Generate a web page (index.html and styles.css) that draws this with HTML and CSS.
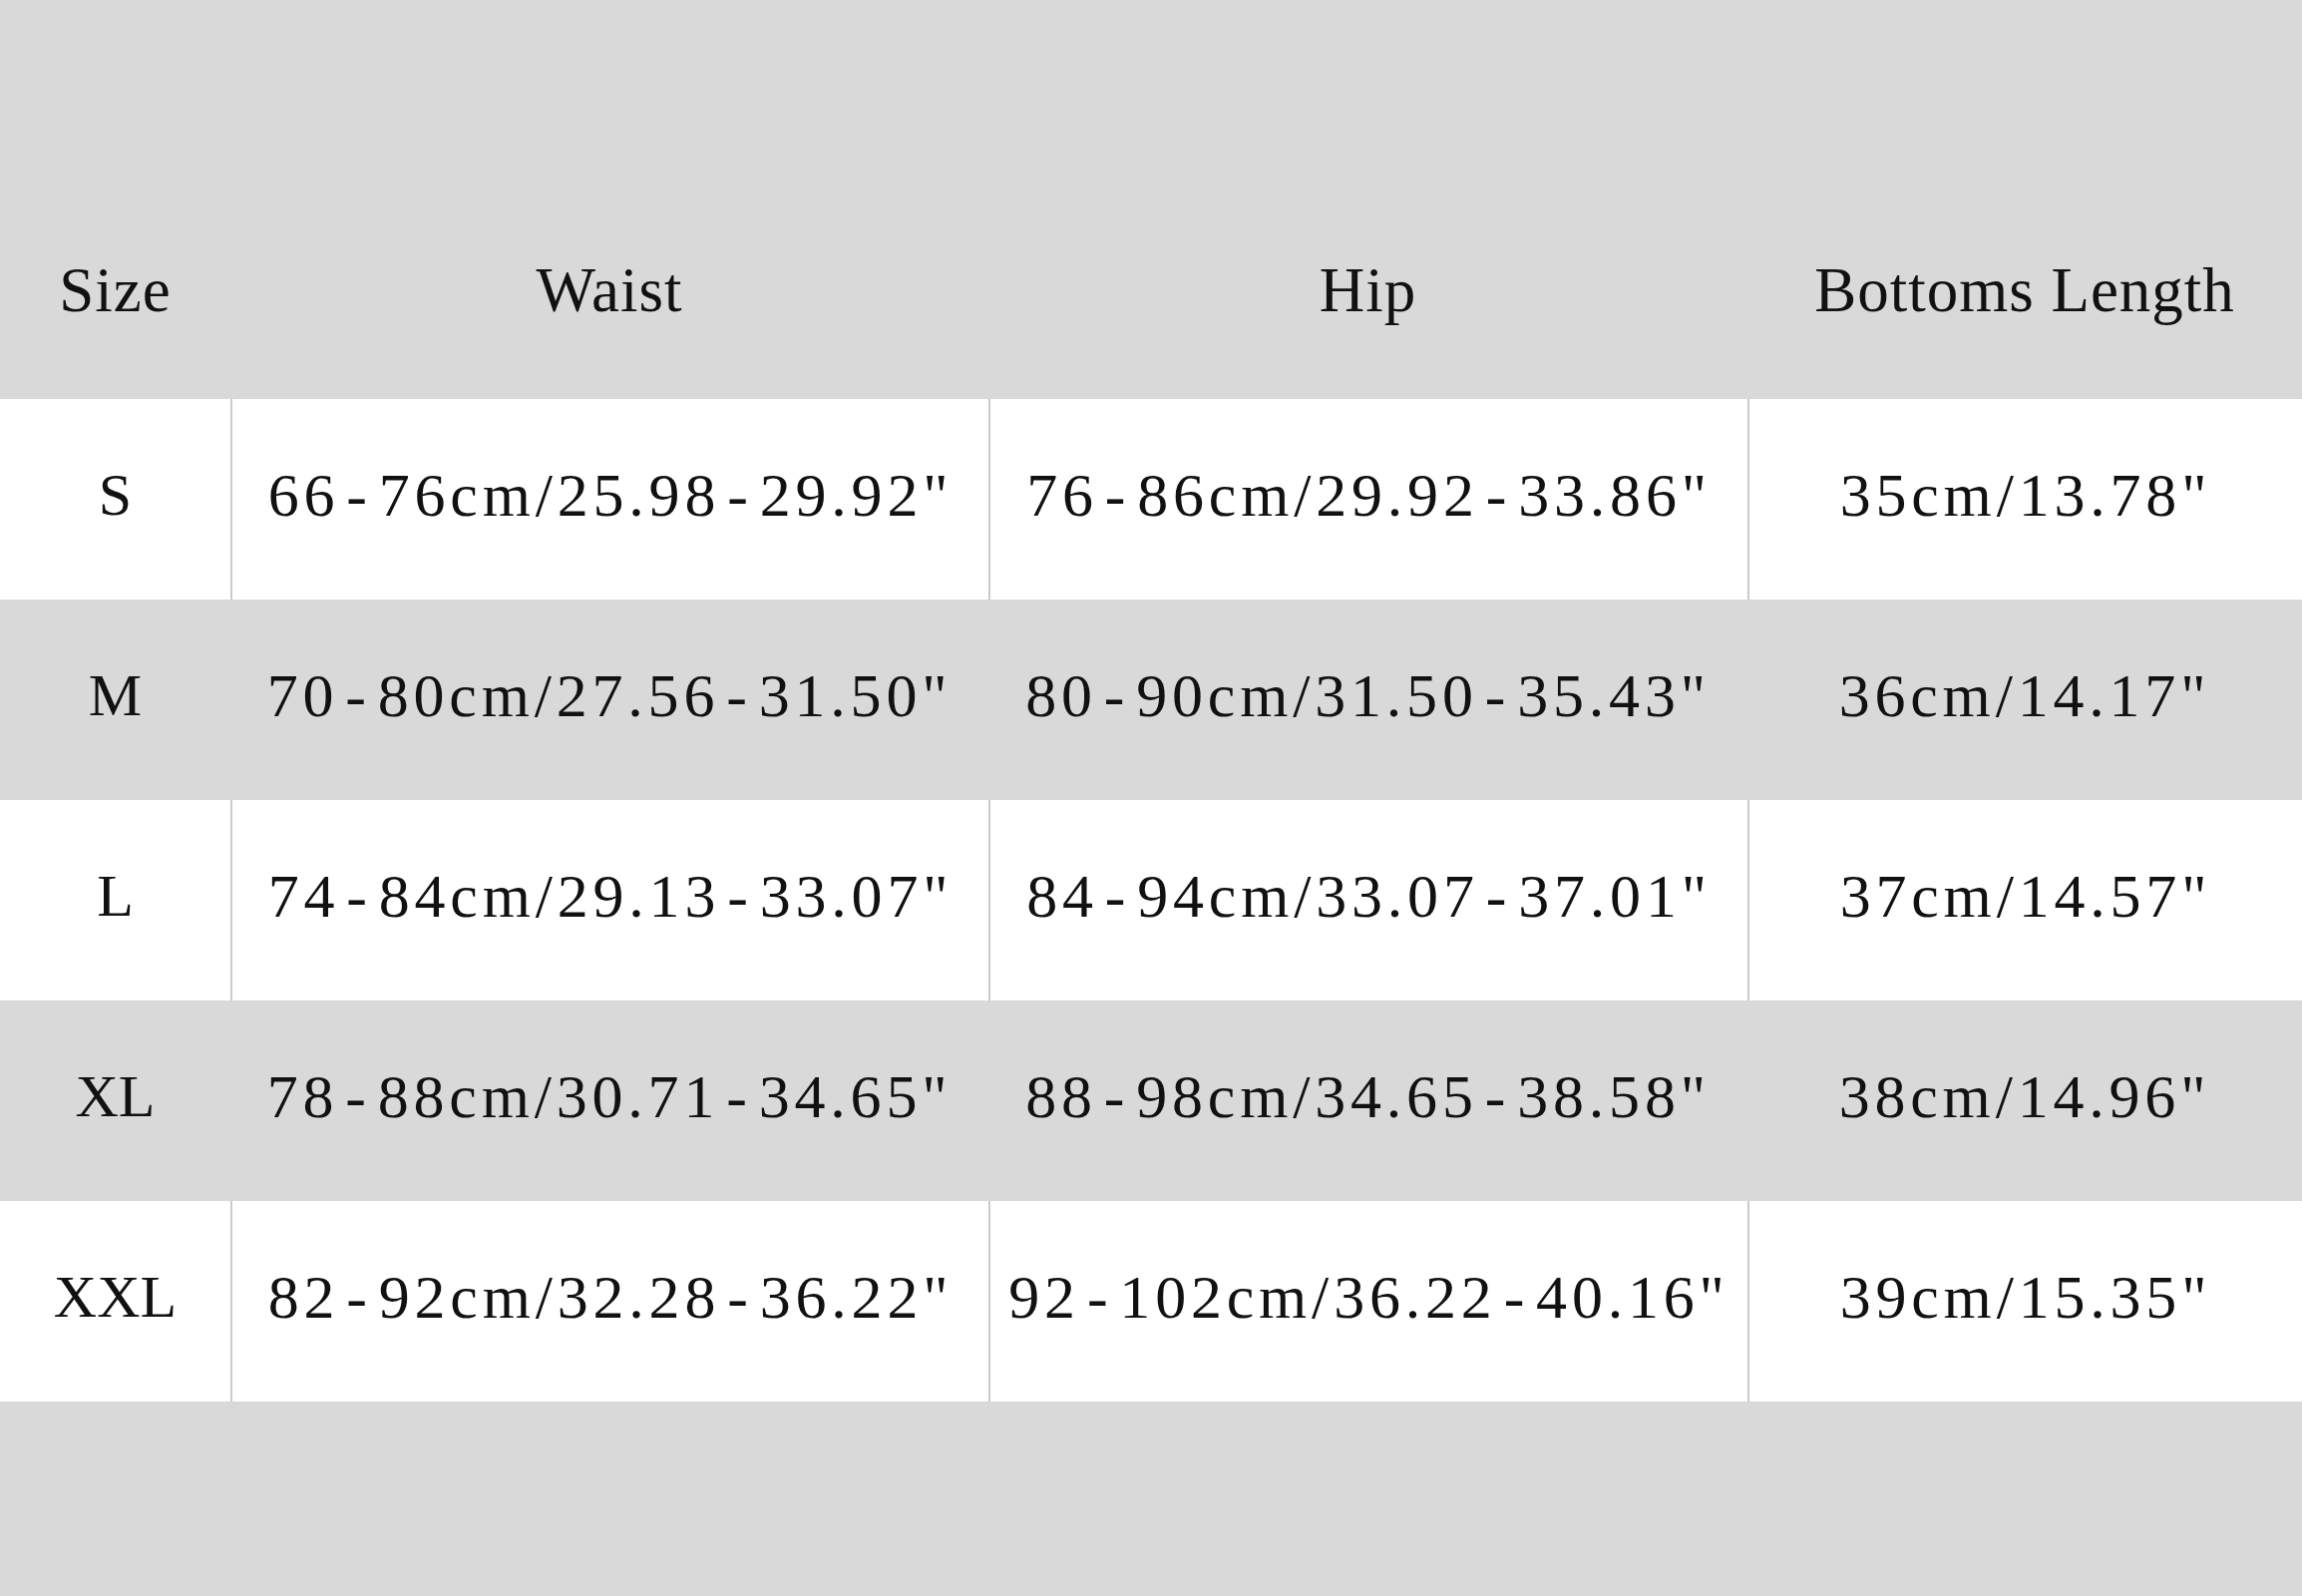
FILE: index.html
```html
<!DOCTYPE html>
<html>
<head>
<meta charset="utf-8">
<link rel="stylesheet" href="styles.css">
</head>
<body>
<div class="page">
  <div class="chart">
    <div class="row head">
      <div class="cell">Size</div>
      <div class="cell">Waist</div>
      <div class="cell">Hip</div>
      <div class="cell">Bottoms Length</div>
    </div>
    <div class="row light">
      <div class="cell size">S</div>
      <div class="cell">66<span class="dash">-</span>76cm/25.98<span class="dash">-</span>29.92"</div>
      <div class="cell">76<span class="dash">-</span>86cm/29.92<span class="dash">-</span>33.86"</div>
      <div class="cell">35cm/13.78"</div>
    </div>
    <div class="row dark">
      <div class="cell size">M</div>
      <div class="cell">70<span class="dash">-</span>80cm/27.56<span class="dash">-</span>31.50"</div>
      <div class="cell">80<span class="dash">-</span>90cm/31.50<span class="dash">-</span>35.43"</div>
      <div class="cell">36cm/14.17"</div>
    </div>
    <div class="row light">
      <div class="cell size">L</div>
      <div class="cell">74<span class="dash">-</span>84cm/29.13<span class="dash">-</span>33.07"</div>
      <div class="cell">84<span class="dash">-</span>94cm/33.07<span class="dash">-</span>37.01"</div>
      <div class="cell">37cm/14.57"</div>
    </div>
    <div class="row dark">
      <div class="cell size">XL</div>
      <div class="cell">78<span class="dash">-</span>88cm/30.71<span class="dash">-</span>34.65"</div>
      <div class="cell">88<span class="dash">-</span>98cm/34.65<span class="dash">-</span>38.58"</div>
      <div class="cell">38cm/14.96"</div>
    </div>
    <div class="row light">
      <div class="cell size">XXL</div>
      <div class="cell">82<span class="dash">-</span>92cm/32.28<span class="dash">-</span>36.22"</div>
      <div class="cell">92<span class="dash">-</span>102cm/36.22<span class="dash">-</span>40.16"</div>
      <div class="cell">39cm/15.35"</div>
    </div>
  </div>
</div>
</body>
</html>
```

FILE: styles.css
```css
html, body {
  margin: 0;
  padding: 0;
  background: #d9d9d9;
}
.page {
  width: 2308px;
  height: 1600px;
  background: #d9d9d9;
  padding-top: 182px;
  box-sizing: border-box;
  font-family: "Liberation Serif", "Times New Roman", serif;
  color: #111;
}
.chart {
  display: flex;
  flex-direction: column;
}
.row {
  display: grid;
  grid-template-columns: 231px 760px 761px 1fr;
  height: 201px;
}
.row.head {
  height: 218px;
}
.cell {
  display: flex;
  align-items: center;
  justify-content: center;
  white-space: nowrap;
  font-size: 62px;
  letter-spacing: 4.8px;
  padding-bottom: 8px;
  box-sizing: border-box;
}
.cell.size {
  letter-spacing: 0;
  font-size: 60px;
}
.dash {
  margin: 0 7px;
}
.head .cell {
  letter-spacing: 1px;
  font-size: 63px;
  padding-bottom: 0;
}
.light {
  background: #ffffff;
}
.dark {
  background: #d9d9d9;
}
.light .cell + .cell {
  border-left: 2px solid #c9c9d0;
}
```
